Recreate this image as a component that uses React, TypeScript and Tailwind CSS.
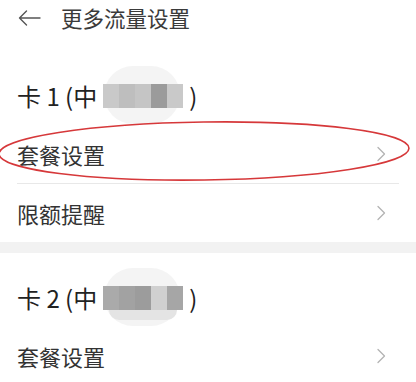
import type { ReactNode } from "react";

const font = {
  fontFamily: '"Noto Sans CJK SC", "Noto Sans", sans-serif',
};

function Chevron() {
  return (
    <svg width="10" height="16" viewBox="0 0 10 16" fill="none" className="shrink-0">
      <path d="M2 1.5 L8.5 8 L2 14.5" stroke="#b3b3b3" strokeWidth="1.3" strokeLinecap="round" strokeLinejoin="round" />
    </svg>
  );
}

function Row({ label, divider }: { label: string; divider?: boolean }) {
  return (
    <div className="mx-[17px]">
      <div className="flex h-[58px] items-center justify-between pr-[13px]">
        <span className="text-[22px] text-[#333]">{label}</span>
        <Chevron />
      </div>
      {divider && <div className="h-px bg-[#e8e8e8]" />}
    </div>
  );
}

function Mosaic({ blocks, tail }: { blocks: string[]; tail?: boolean }) {
  return (
    <span className="relative mx-[6px] inline-flex h-[24px] w-[80px] items-stretch">
      <span className="absolute left-[1px] top-[-18px] h-[58px] w-[76px] rounded-[30px] bg-[#f1f1f1] opacity-80" />
      {tail && <span className="absolute left-[6px] top-[18px] h-[16px] w-[68px] rounded-b-[10px] bg-[#e4e4e4]" />}
      {blocks.map((c, i) => (
        <span key={i} className="relative flex-1" style={{ backgroundColor: c }} />
      ))}
    </span>
  );
}

function CardTitle({ n, children }: { n: string; children: ReactNode }) {
  return (
    <div className="flex h-[48px] items-center px-[17px] text-[24px] text-[#222]">
      <span>卡 {n} (中</span>
      {children}
      <span>)</span>
    </div>
  );
}

export default function App() {
  return (
    <div className="relative h-[382px] w-[416px] overflow-hidden bg-white" style={font}>
      {/* Header */}
      <div className="flex h-[36px] items-center gap-[20px] pl-[18px]">
        <svg width="23" height="16" viewBox="0 0 23 16" fill="none">
          <path d="M22 8 H1.5 M8.5 1 L1.5 8 L8.5 15" stroke="#555" strokeWidth="1.4" strokeLinecap="round" strokeLinejoin="round" />
        </svg>
        <span className="text-[21.5px] text-[#3a3a3a]">更多流量设置</span>
      </div>

      <div className="h-[36px]" />
      <CardTitle n="1">
        <Mosaic blocks={["#c9c9c9", "#bebebe", "#c5c5c5", "#9b9b9b", "#c9c9c9"]} />
      </CardTitle>
      <div className="h-[5px]" />
      <Row label="套餐设置" divider />
      <Row label="限额提醒" />

      <div className="h-[11px] bg-[#f2f2f2]" />

      <div className="h-[21px]" />
      <CardTitle n="2">
        <Mosaic blocks={["#aaaaaa", "#a2a2a2", "#9c9c9c", "#d0d0d0", "#a6a6a6"]} tail />
      </CardTitle>
      <div className="h-[5px]" />
      <Row label="套餐设置" />

      {/* red annotation ellipse */}
      <svg className="pointer-events-none absolute left-0 top-0" width="416" height="382" viewBox="0 0 416 382">
        <ellipse cx="204" cy="151" rx="205" ry="29" transform="rotate(-0.8 204 151)" fill="none" stroke="#d6383a" strokeWidth="1.6" />
      </svg>
    </div>
  );
}
